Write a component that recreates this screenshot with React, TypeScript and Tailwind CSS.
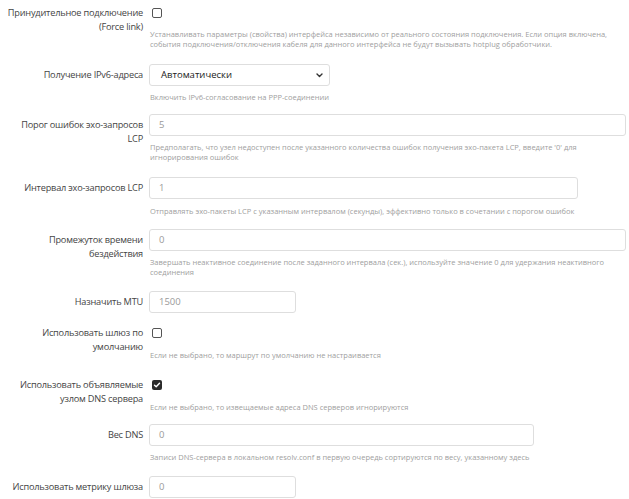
import { ReactNode } from "react";

function Check({ checked }: { checked?: boolean }) {
  return (
    <div className="h-[14px] flex items-center pl-[3px]">
      {checked ? (
        <div className="w-[10px] h-[10px] rounded-[2px] bg-[#2b2b2b] flex items-center justify-center">
          <svg width="8" height="8" viewBox="0 0 8 8" fill="none">
            <path d="M1.5 4.2 L3.2 5.8 L6.5 2.2" stroke="#fff" strokeWidth="1.4" strokeLinecap="round" strokeLinejoin="round" />
          </svg>
        </div>
      ) : (
        <div className="w-[10px] h-[10px] rounded-[2px] border border-[#555] bg-white" />
      )}
    </div>
  );
}

function Field({ value, width }: { value: string; width: string }) {
  return (
    <div className={`${width} h-[22px] border border-[#dedede] rounded-[3px] bg-white flex items-center px-[9px] text-[9.5px] text-[#9a9a9a]`}>
      {value}
    </div>
  );
}

function Help({ children, mt }: { children: ReactNode; mt: string }) {
  return (
    <div className={`${mt} pl-[1px] text-[7.5px] leading-[10px] text-[#a0a0a0]`}>
      {children}
    </div>
  );
}

function Row({ label, mt, pt, children }: { label: ReactNode; mt: string; pt: string; children: ReactNode }) {
  return (
    <div className={`flex ${mt}`}>
      <div className={`w-[149px] shrink-0 text-right pr-[6px] ${pt} text-[9.2px] leading-[14px] tracking-[-0.2px] text-[#444]`}>
        {label}
      </div>
      <div className="flex-1 min-w-0">{children}</div>
    </div>
  );
}

export default function App() {
  return (
    <div className="w-[629px] h-[499px] overflow-hidden bg-white pt-[6px] pr-[3px] font-['Open_Sans',sans-serif]">
      <Row label={<>Принудительное подключение<br />(Force link)</>} mt="mt-0" pt="pt-0">
        <Check />
        <Help mt="mt-[9px]">
          Устанавливать параметры (свойства) интерфейса независимо от реального состояния подключения. Если опция включена, события подключения/отключения кабеля для данного интерфейса не будут вызывать hotplug обработчики.
        </Help>
      </Row>

      <Row label="Получение IPv6-адреса" mt="mt-[15px]" pt="pt-[4px]">
        <div className="w-[181px] h-[22px] border border-[#dedede] rounded-[3px] bg-white flex items-center justify-between pl-[11px] pr-[6px] text-[9.5px] text-[#222]">
          <span>Автоматически</span>
          <svg width="7" height="5" viewBox="0 0 7 5" fill="none">
            <path d="M1 1 L3.5 3.5 L6 1" stroke="#333" strokeWidth="1.4" strokeLinecap="round" strokeLinejoin="round" />
          </svg>
        </div>
        <Help mt="mt-[6px]">Включить IPv6-согласование на PPP-соединении</Help>
      </Row>

      <Row label={<>Порог ошибок эхо-запросов<br />LCP</>} mt="mt-[12px]" pt="pt-[4px]">
        <Field value="5" width="w-[477px]" />
        <Help mt="mt-[6px]">
          Предполагать, что узел недоступен после указанного количества ошибок получения эхо-пакета LCP, введите '0' для игнорирования ошибок
        </Help>
      </Row>

      <Row label="Интервал эхо-запросов LCP" mt="mt-[15px]" pt="pt-[4px]">
        <Field value="1" width="w-[429px]" />
        <Help mt="mt-[7px]">
          Отправлять эхо-пакеты LCP с указанным интервалом (секунды), эффективно только в сочетании с порогом ошибок
        </Help>
      </Row>

      <Row label={<>Промежуток времени<br />бездействия</>} mt="mt-[13px]" pt="pt-[4px]">
        <Field value="0" width="w-[477px]" />
        <Help mt="mt-[6px]">
          Завершать неактивное соединение после заданного интервала (сек.), используйте значение 0 для удержания неактивного соединения
        </Help>
      </Row>

      <Row label="Назначить MTU" mt="mt-[14px]" pt="pt-[4px]">
        <Field value="1500" width="w-[147px]" />
      </Row>

      <Row label={<>Использовать шлюз по<br />умолчанию</>} mt="mt-[13px]" pt="pt-0">
        <Check />
        <Help mt="mt-[10px]">Если не выбрано, то маршрут по умолчанию не настраивается</Help>
      </Row>

      <Row label={<>Использовать объявляемые<br />узлом DNS сервера</>} mt="mt-[18px]" pt="pt-0">
        <Check checked />
        <Help mt="mt-[10px]">Если не выбрано, то извещаемые адреса DNS серверов игнорируются</Help>
      </Row>

      <Row label="Вес DNS" mt="mt-[12px]" pt="pt-[4px]">
        <Field value="0" width="w-[385px]" />
        <Help mt="mt-[6px]">
          Записи DNS-сервера в локальном resolv.conf в первую очередь сортируются по весу, указанному здесь
        </Help>
      </Row>

      <Row label="Использовать метрику шлюза" mt="mt-[14px]" pt="pt-[4px]">
        <Field value="0" width="w-[147px]" />
      </Row>
    </div>
  );
}
